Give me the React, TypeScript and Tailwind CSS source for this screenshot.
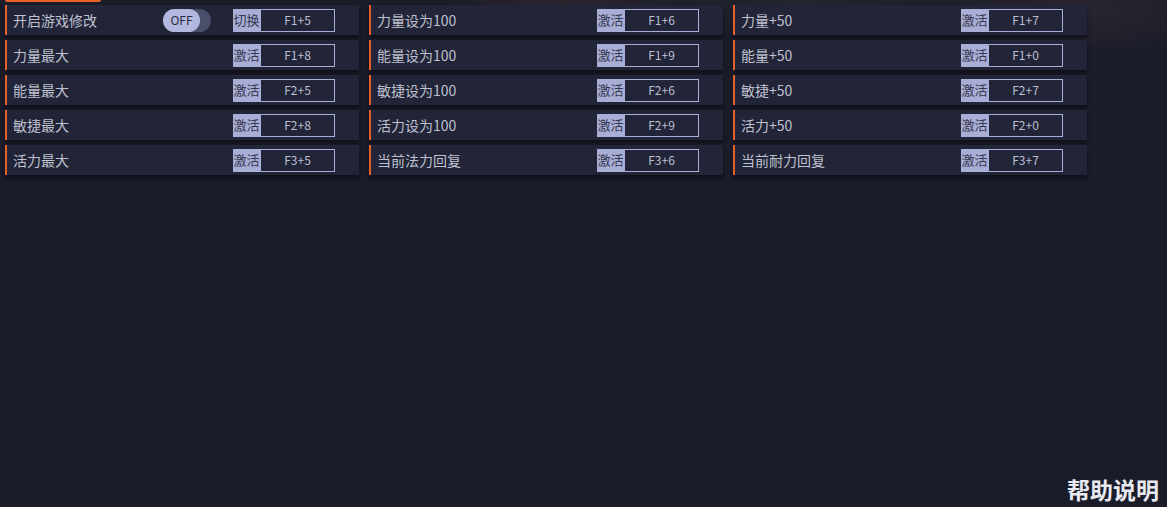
import React from 'react'

type Item = { label: string; keys: string; action?: string; toggle?: boolean }

const items: Item[] = [
    { label: '开启游戏修改', keys: 'F1+5', action: '切换', toggle: true },
    { label: '力量设为100', keys: 'F1+6' },
    { label: '力量+50', keys: 'F1+7' },
    { label: '力量最大', keys: 'F1+8' },
    { label: '能量设为100', keys: 'F1+9' },
    { label: '能量+50', keys: 'F1+0' },
    { label: '能量最大', keys: 'F2+5' },
    { label: '敏捷设为100', keys: 'F2+6' },
    { label: '敏捷+50', keys: 'F2+7' },
    { label: '敏捷最大', keys: 'F2+8' },
    { label: '活力设为100', keys: 'F2+9' },
    { label: '活力+50', keys: 'F2+0' },
    { label: '活力最大', keys: 'F3+5' },
    { label: '当前法力回复', keys: 'F3+6' },
    { label: '当前耐力回复', keys: 'F3+7' },
]

function Toggle() {
    return (
        <div className="w-[48px] h-[23px] rounded-full bg-[#4a4e6b] flex items-center mr-[22px]">
            <div className="w-[37px] h-[23px] rounded-full bg-[#b3b8de] flex items-center justify-center text-[12px] text-[#2a2c40]">
                OFF
            </div>
        </div>
    )
}

function Row({ item }: { item: Item }) {
    return (
        <div className="h-[30px] flex items-center bg-[#222437] border-l-2 border-[#e6612a] shadow-[0_3px_4px_rgba(0,0,0,0.45)]">
            <span className="flex-1 pl-[6px] text-[14px] text-[#bfc1d0]">{item.label}</span>
            {item.toggle && <Toggle />}
            <div className="flex h-[23px] mr-[24px]">
                <div className="w-[27px] bg-[#a9aed6] text-[13px] text-[#353850] flex items-center justify-center">
                    {item.action ?? '激活'}
                </div>
                <div className="w-[75px] border border-[#a9aed6] text-[12px] text-[#bcbfd3] flex items-center justify-center">
                    {item.keys}
                </div>
            </div>
        </div>
    )
}

export default function App() {
    return (
        <div
            className="h-screen w-full flex flex-col bg-[#1b1c2a] bg-[radial-gradient(ellipse_120px_35px_at_560px_0px,rgba(90,70,60,0.25),transparent),radial-gradient(ellipse_150px_45px_at_1080px_10px,rgba(100,75,60,0.2),transparent),radial-gradient(ellipse_220px_35px_at_800px_0px,rgba(60,55,60,0.3),transparent)]"
            style={{ fontFamily: '"Noto Sans CJK SC", "Noto Sans", sans-serif' }}
        >
            <div className="ml-[5px] w-[96px] h-[2px] bg-[#e6612a] rounded-b" />
            <div className="mt-[3px] ml-[5px] grid grid-cols-[354px_354px_354px] gap-x-[10px] gap-y-[5px]">
                {items.map((item) => (
                    <Row key={item.label} item={item} />
                ))}
            </div>
            <div className="flex-1" />
            <div className="flex justify-end pr-[8px] pb-[4px]">
                <span className="text-[23px] font-bold text-[#e8e9f0] leading-[28px]">帮助说明</span>
            </div>
        </div>
    )
}
